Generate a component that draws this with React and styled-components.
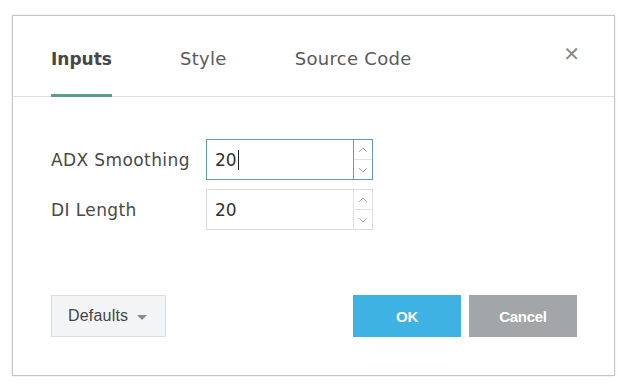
import styled, { createGlobalStyle } from "styled-components";

const Global = createGlobalStyle`
  html, body {
    margin: 0;
    padding: 0;
    background: #ffffff;
  }
  body {
    font-family: "DejaVu Sans", "Open Sans", sans-serif;
  }
`;

const Page = styled.div`
  width: 636px;
  height: 392px;
  padding: 15px 0 0 12px;
  box-sizing: border-box;
`;

const Dialog = styled.div`
  width: 603px;
  height: 361px;
  box-sizing: border-box;
  border: 1px solid #c6c6c6;
  box-shadow: 0 0 2px rgba(0, 0, 0, 0.12);
  background: #fff;
  display: flex;
  flex-direction: column;
`;

const Header = styled.div`
  height: 81px;
  box-sizing: border-box;
  border-bottom: 1px solid #dedede;
  display: flex;
  align-items: stretch;
  padding: 0 34px 0 38px;
`;

const Tabs = styled.div`
  display: flex;
  gap: 68px;
  flex: 1;
`;

const Tab = styled.div`
  display: flex;
  align-items: center;
  padding-top: 7px;
  font-size: ${(p) => (p.$active ? "17px" : "18px")};
  letter-spacing: ${(p) => (p.$active ? "0" : "0.3px")};
  color: ${(p) => (p.$active ? "#474747" : "#5a5a5a")};
  font-weight: ${(p) => (p.$active ? 600 : 400)};
  border-bottom: 3px solid ${(p) => (p.$active ? "#5a9e89" : "transparent")};
  margin-bottom: -1px;
`;

const Close = styled.div`
  padding-top: 28px;
  color: #8a8a8a;
  font-size: 20px;
  line-height: 1;
`;

const Body = styled.div`
  flex: 1;
  padding: 42px 38px 0 38px;
  display: flex;
  flex-direction: column;
  gap: 9px;
`;

const Row = styled.div`
  display: flex;
  align-items: center;
`;

const Label = styled.div`
  width: 155px;
  font-size: 17px;
  letter-spacing: 0.4px;
  color: #484848;
`;

const Field = styled.div`
  width: 167px;
  height: 41px;
  box-sizing: border-box;
  border: 1px solid ${(p) => (p.$focus ? "#5d9fab" : "#dcdcdc")};
  display: flex;
`;

const Value = styled.div`
  flex: 1;
  display: flex;
  align-items: center;
  padding-left: 8px;
  font-size: 17px;
  color: #333;
`;

const Caret = styled.span`
  display: inline-block;
  width: 1px;
  height: 20px;
  background: #222;
  margin-left: 1px;
`;

const Spinner = styled.div`
  width: 18px;
  border-left: 1px solid ${(p) => (p.$focus ? "#5d9fab" : "#e2e2e2")};
  display: flex;
  flex-direction: column;
`;

const Step = styled.div`
  flex: 1;
  display: flex;
  align-items: center;
  justify-content: center;
  & + & {
    border-top: 1px solid ${(p) => (p.$focus ? "#5d9fab" : "#e2e2e2")};
  }
`;

const Footer = styled.div`
  display: flex;
  align-items: center;
  padding: 0 37px 38px 38px;
`;

const DefaultsButton = styled.div`
  width: 115px;
  height: 42px;
  box-sizing: border-box;
  border: 1px solid #dcdcdc;
  background: #f3f4f6;
  display: flex;
  align-items: center;
  padding-left: 16px;
  gap: 9px;
  font-family: "Liberation Sans", Arial, sans-serif;
  font-size: 16px;
  letter-spacing: 0.2px;
  color: #444;
`;

const Triangle = styled.span`
  width: 0;
  height: 0;
  border-left: 5px solid transparent;
  border-right: 5px solid transparent;
  border-top: 5px solid #8a8a8a;
  margin-top: 2px;
`;

const Spacer = styled.div`
  flex: 1;
`;

const Action = styled.div`
  width: 108px;
  height: 42px;
  display: flex;
  align-items: center;
  justify-content: center;
  background: ${(p) => (p.$primary ? "#3db2e3" : "#a3a6a9")};
  color: #fff;
  font-family: "Liberation Sans", Arial, sans-serif;
  font-weight: 700;
  font-size: 15px;
  letter-spacing: -0.3px;
  margin-left: ${(p) => (p.$primary ? "0" : "8px")};
`;

function Chevron({ up }) {
  return (
    <svg width="10" height="6" viewBox="0 0 10 6">
      <path
        d={up ? "M1 5 L5 1 L9 5" : "M1 1 L5 5 L9 1"}
        fill="none"
        stroke="#a8a8a8"
        strokeWidth="1"
      />
    </svg>
  );
}

function NumberField({ value, focus }) {
  return (
    <Field $focus={focus}>
      <Value>
        {value}
        {focus && <Caret />}
      </Value>
      <Spinner $focus={focus}>
        <Step $focus={focus}>
          <Chevron up />
        </Step>
        <Step $focus={focus}>
          <Chevron />
        </Step>
      </Spinner>
    </Field>
  );
}

export default function App() {
  return (
    <Page>
      <Global />
      <Dialog>
        <Header>
          <Tabs>
            <Tab $active>Inputs</Tab>
            <Tab>Style</Tab>
            <Tab>Source Code</Tab>
          </Tabs>
          <Close>✕</Close>
        </Header>
        <Body>
          <Row>
            <Label>ADX Smoothing</Label>
            <NumberField value="20" focus />
          </Row>
          <Row>
            <Label>DI Length</Label>
            <NumberField value="20" />
          </Row>
        </Body>
        <Footer>
          <DefaultsButton>
            Defaults <Triangle />
          </DefaultsButton>
          <Spacer />
          <Action $primary>OK</Action>
          <Action>Cancel</Action>
        </Footer>
      </Dialog>
    </Page>
  );
}
